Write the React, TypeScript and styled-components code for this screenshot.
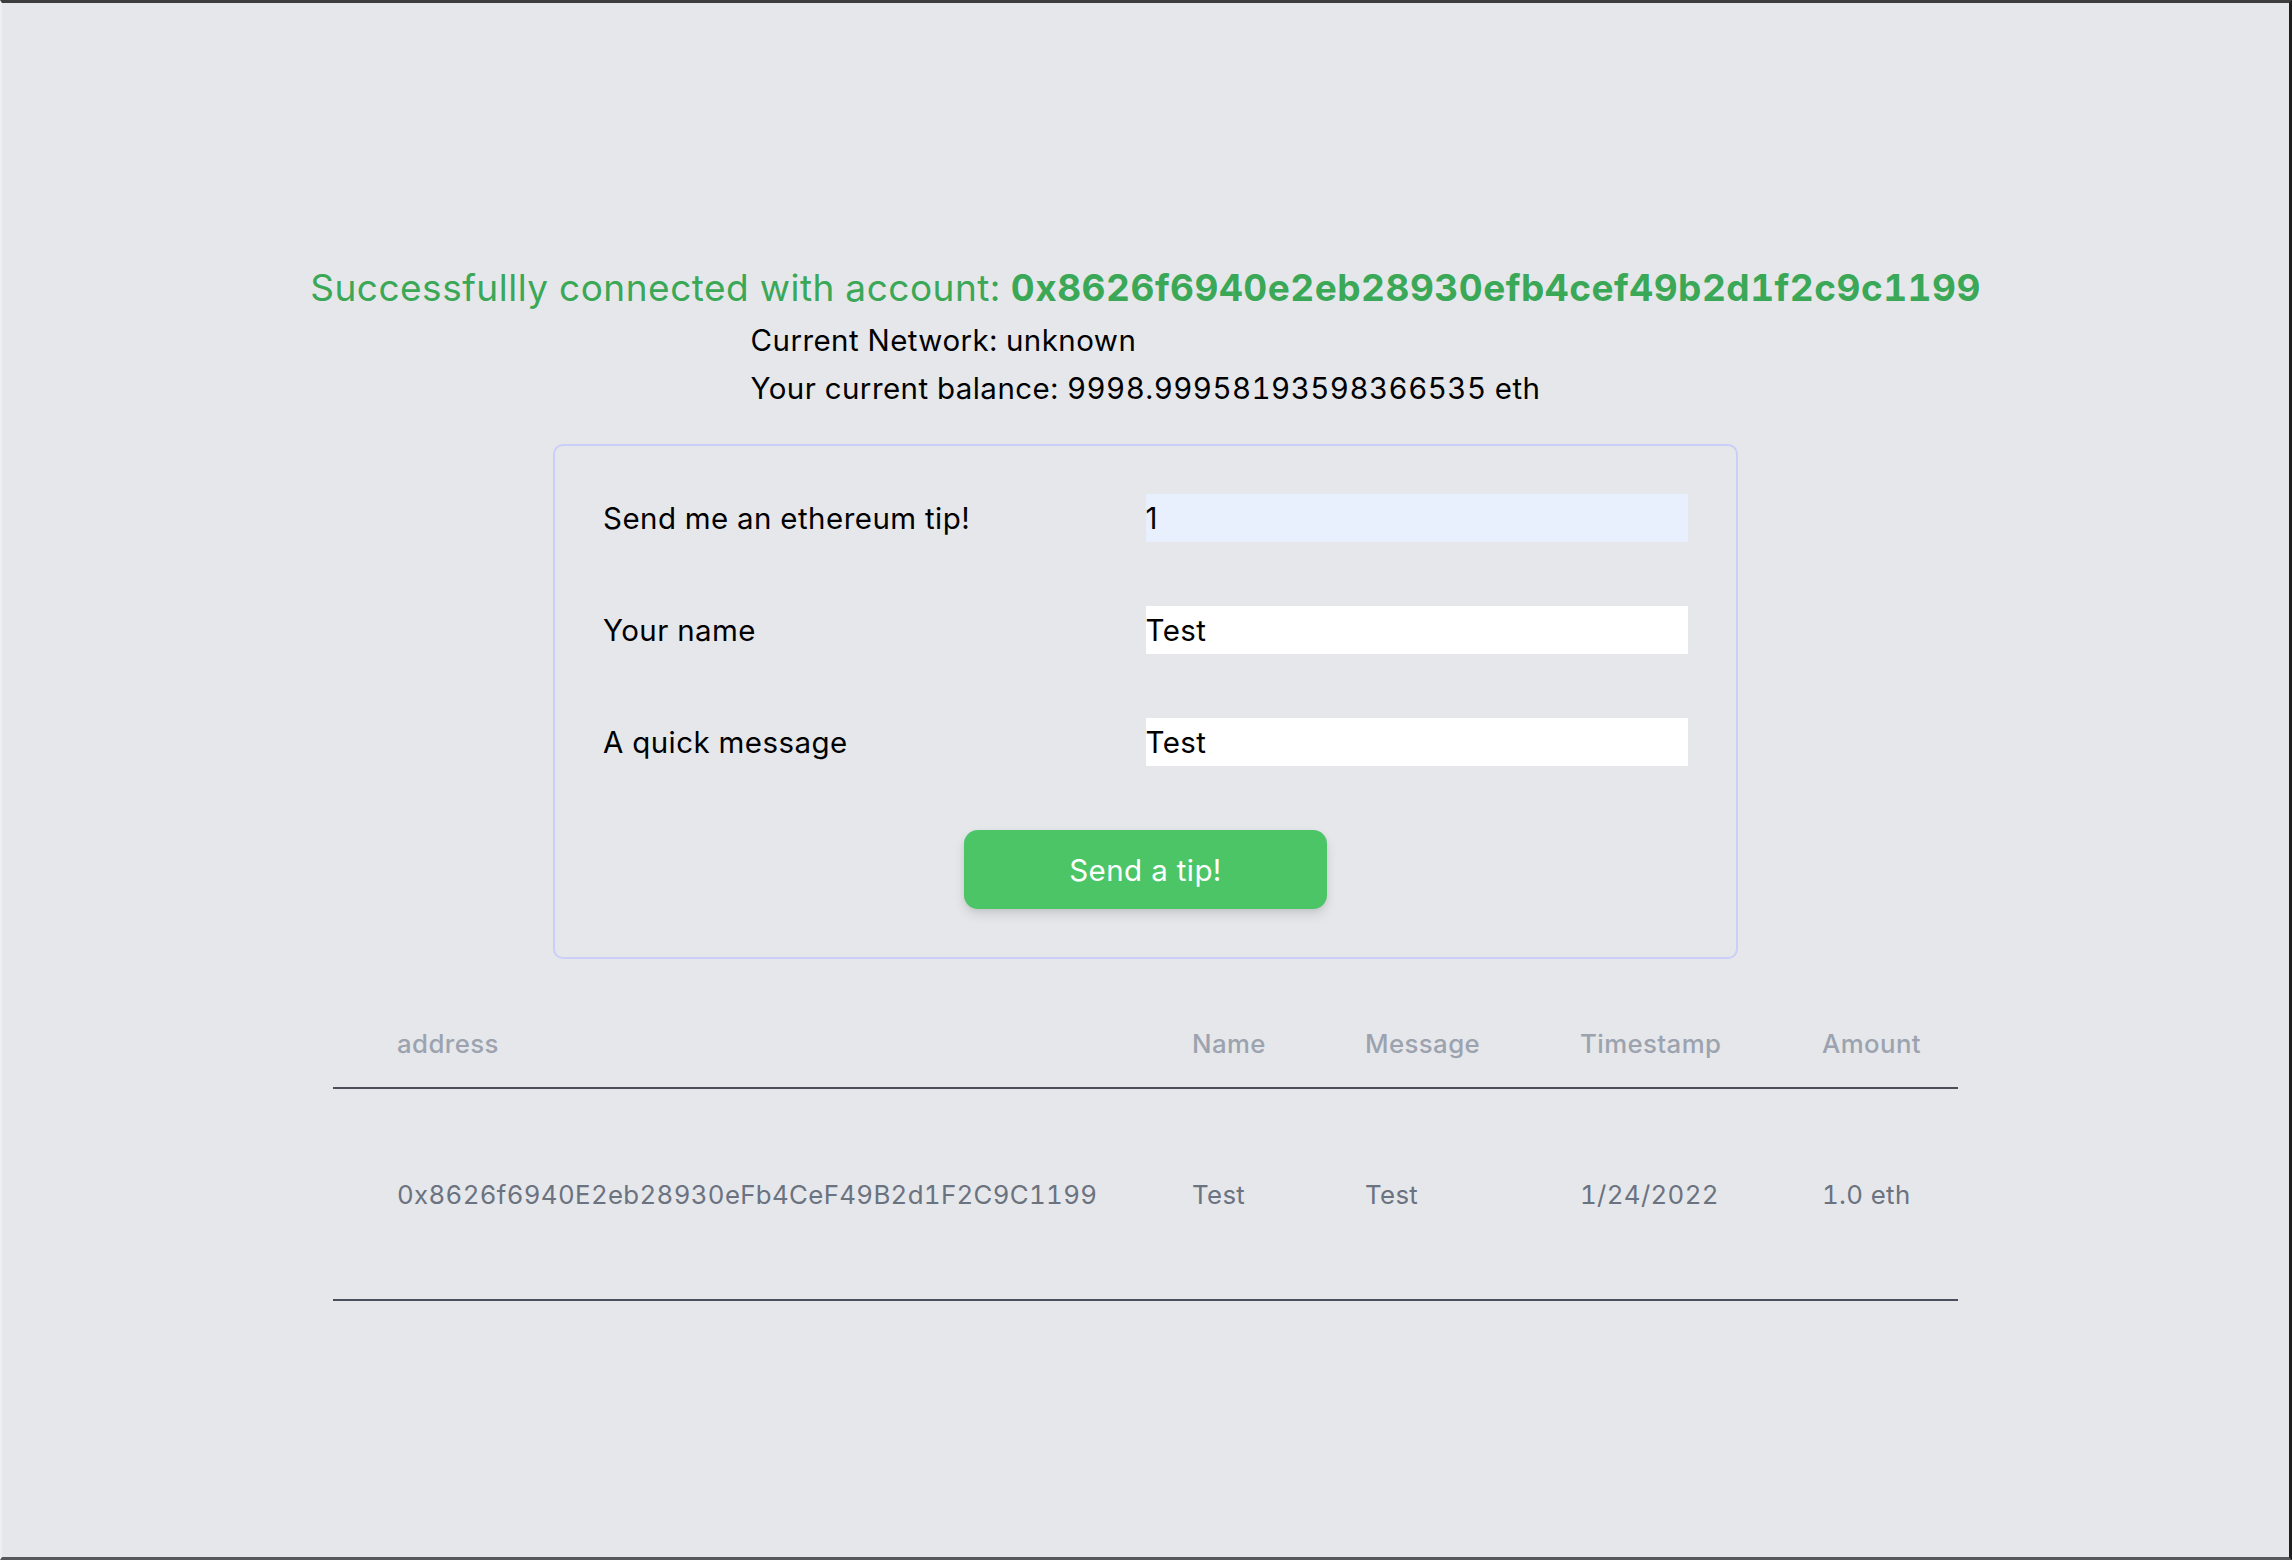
import React from "react";
import styled, { createGlobalStyle } from "styled-components";

const Global = createGlobalStyle`
  html, body { margin: 0; padding: 0; }
  body {
    background: #e5e7eb;
    font-family: Inter, "Noto Sans", sans-serif;
    font-feature-settings: "tnum" 1;
    color: #000;
  }
  * { box-sizing: border-box; }
`;

const Frame = styled.div`
  min-height: 100vh;
  border-top: 3px solid #3d3d3d;
  border-right: 3px solid #1f1f1f;
  border-bottom: 3px solid #56585c;
  border-left: 2px solid #eeeff2;
  padding-top: 258px;
  display: flex;
  flex-direction: column;
  align-items: center;
`;

const Headline = styled.div`
  font-size: 37px;
  letter-spacing: 0.5px;
  line-height: 54px;
  color: #3aa856;
  white-space: nowrap;
`;

const Address = styled.span`
  font-weight: 700;
`;

const Info = styled.div`
  margin-top: 1px;
  width: fit-content;
  font-size: 29.5px;
  letter-spacing: 0.45px;
  line-height: 48px;
  text-align: left;
`;

const Card = styled.form`
  margin-top: 32px;
  width: 1185px;
  border: 2px solid #cbcef8;
  border-radius: 10px;
  padding: 48px;
  display: grid;
  grid-template-columns: 1fr 1fr;
  row-gap: 64px;
  align-items: center;
`;

const Label = styled.label`
  font-size: 29.5px;
  letter-spacing: 0.45px;
  line-height: 48px;
  color: #000;
`;

const Input = styled.input<{ $auto?: boolean }>`
  height: 48px;
  width: 100%;
  border: none;
  outline: none;
  padding: 0;
  font-family: inherit;
  font-size: 29.5px;
  letter-spacing: 0.4px;
  color: #000;
  background: ${(p) => (p.$auto ? "#e8effd" : "#ffffff")};
`;

const Button = styled.button`
  grid-column: 1 / span 2;
  justify-self: center;
  width: 363px;
  height: 79px;
  border: none;
  border-radius: 14px;
  background: #4bc566;
  color: #fff;
  font-family: inherit;
  font-size: 29.5px;
  letter-spacing: 0.4px;
  box-shadow: 0 6px 12px rgba(0, 0, 0, 0.1), 0 2px 5px rgba(0, 0, 0, 0.06);
`;

const Table = styled.div`
  margin-top: 44px;
  width: 1625px;
`;

const cols = "859px 173px 215px 242px 136px";

const HeadRow = styled.div`
  display: grid;
  grid-template-columns: ${cols};
  height: 86px;
  padding-bottom: 3px;
  align-items: center;
  border-bottom: 2px solid #4a4f5b;
`;

const BodyRow = styled.div`
  display: grid;
  grid-template-columns: ${cols};
  height: 212px;
  align-items: center;
  border-bottom: 2px solid #4a4f5b;
`;

const HeadCell = styled.div<{ $first?: boolean }>`
  padding-left: ${(p) => (p.$first ? "64px" : "0")};
  font-size: 25.8px;
  letter-spacing: 0.4px;
  font-weight: 500;
  color: #9ca3af;
`;

const Cell = styled.div<{ $first?: boolean }>`
  padding-left: ${(p) => (p.$first ? "64px" : "0")};
  font-size: 25.8px;
  letter-spacing: 0.35px;
  color: #6b7280;
  white-space: nowrap;
`;

export default function App() {
  const headers = ["address", "Name", "Message", "Timestamp", "Amount"];
  const row = [
    "0x8626f6940E2eb28930eFb4CeF49B2d1F2C9C1199",
    "Test",
    "Test",
    "1/24/2022",
    "1.0 eth",
  ];
  return (
    <>
      <Global />
      <Frame>
        <Headline>
          Successfullly connected with account:{" "}
          <Address>0x8626f6940e2eb28930efb4cef49b2d1f2c9c1199</Address>
        </Headline>
        <Info>
          <div>Current Network: unknown</div>
          <div>Your current balance: 9998.99958193598366535 eth</div>
        </Info>
        <Card onSubmit={(e) => e.preventDefault()}>
          <Label>Send me an ethereum tip!</Label>
          <Input $auto defaultValue="1" />
          <Label>Your name</Label>
          <Input defaultValue="Test" />
          <Label>A quick message</Label>
          <Input defaultValue="Test" />
          <Button type="submit">Send a tip!</Button>
        </Card>
        <Table>
          <HeadRow>
            {headers.map((h, i) => (
              <HeadCell key={h} $first={i === 0}>
                {h}
              </HeadCell>
            ))}
          </HeadRow>
          <BodyRow>
            {row.map((c, i) => (
              <Cell key={i} $first={i === 0}>
                {c}
              </Cell>
            ))}
          </BodyRow>
        </Table>
      </Frame>
    </>
  );
}
